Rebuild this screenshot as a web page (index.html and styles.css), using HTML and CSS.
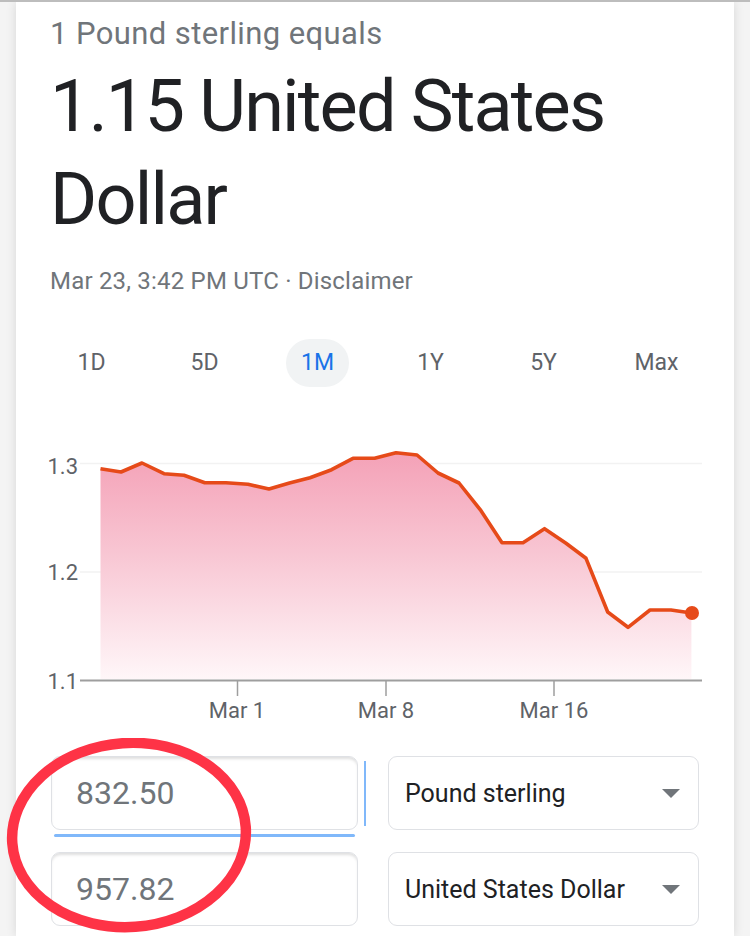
FILE: index.html
```html
<!DOCTYPE html>
<html>
<head>
<meta charset="utf-8">
<link rel="stylesheet" href="styles.css">
</head>
<body>
<div class="card">
  <div class="subtitle">1 Pound sterling equals</div>
  <div class="headline">1.15 United States Dollar</div>
  <div class="meta">Mar 23, 3:42 PM UTC · Disclaimer</div>
  <div class="tabs">
    <div class="tab"><span>1D</span></div>
    <div class="tab"><span>5D</span></div>
    <div class="tab active"><span>1M</span></div>
    <div class="tab"><span>1Y</span></div>
    <div class="tab"><span>5Y</span></div>
    <div class="tab"><span>Max</span></div>
  </div>
  <svg class="chart" width="718" height="314" viewBox="16 420 718 314">
    <defs>
      <linearGradient id="fill" x1="0" y1="450" x2="0" y2="682" gradientUnits="userSpaceOnUse">
        <stop offset="0" stop-color="#f4a0b6"/>
        <stop offset="0.45" stop-color="#f8c6d3"/>
        <stop offset="1" stop-color="#fff7f9"/>
      </linearGradient>
    </defs>
    <line x1="80" y1="464.5" x2="702" y2="464.5" stroke="#f2f2f2" stroke-width="1.5"/>
    <line x1="80" y1="573" x2="702" y2="573" stroke="#f2f2f2" stroke-width="1.5"/>
    <path fill="url(#fill)" d="M100.5,469.7 L121,473 L142,464 L164,474.7 L184,476.3 L204.8,483.7 L226,483.7 L248,485.3 L269,490 L289.5,484 L310,478.7 L331.6,470.7 L353,459.3 L374.6,459.3 L396,453.7 L417,456 L438,474 L459,484 L481,511.7 L502,543.7 L523,543.7 L544.5,529.7 L566,544.3 L586,559.3 L607.7,613 L628,628.3 L650,611 L671,611 L691.4,614 L691.4,680 L100.5,680 Z"/>
    <path fill="none" stroke="#e64a19" stroke-width="3.6" stroke-linejoin="round" d="M100.5,469.7 L121,473 L142,464 L164,474.7 L184,476.3 L204.8,483.7 L226,483.7 L248,485.3 L269,490 L289.5,484 L310,478.7 L331.6,470.7 L353,459.3 L374.6,459.3 L396,453.7 L417,456 L438,474 L459,484 L481,511.7 L502,543.7 L523,543.7 L544.5,529.7 L566,544.3 L586,559.3 L607.7,613 L628,628.3 L650,611 L671,611 L691.4,614"/>
    <circle cx="692" cy="614" r="7" fill="#e64a19"/>
    <line x1="80" y1="681.5" x2="702" y2="681.5" stroke="#9e9e9e" stroke-width="2"/>
    <line x1="237.5" y1="682" x2="237.5" y2="697" stroke="#9e9e9e" stroke-width="1.5"/>
    <line x1="386" y1="682" x2="386" y2="697" stroke="#9e9e9e" stroke-width="1.5"/>
    <line x1="554" y1="682" x2="554" y2="697" stroke="#9e9e9e" stroke-width="1.5"/>
    <text class="ylab" x="78" y="475" text-anchor="end">1.3</text>
    <text class="ylab" x="78" y="581" text-anchor="end">1.2</text>
    <text class="ylab" x="78" y="690" text-anchor="end">1.1</text>
    <text class="xlab" x="237" y="719" text-anchor="middle">Mar 1</text>
    <text class="xlab" x="386" y="719" text-anchor="middle">Mar 8</text>
    <text class="xlab" x="554" y="719" text-anchor="middle">Mar 16</text>
  </svg>
  <div class="converter">
    <div class="field focused">832.50</div>
    <div class="select">Pound sterling<span class="caret"></span></div>
    <div class="field">957.82</div>
    <div class="select">United States Dollar<span class="caret"></span></div>
    <svg class="circle" width="260" height="210" viewBox="0 0 260 210">
      <ellipse cx="124" cy="97" rx="117" ry="92" fill="none" stroke="#fe3346" stroke-width="10.5" transform="rotate(-4 124 97)"/>
    </svg>
  </div>
</div>
</body>
</html>
```

FILE: styles.css
```css
html, body {
  margin: 0;
  padding: 0;
}
body {
  background: #f4f4f4;
  font-family: Roboto, "Liberation Sans", Arial, sans-serif;
  width: 750px;
  height: 936px;
  overflow: hidden;
  border-top: 2px solid #bdbdbd;
  box-sizing: border-box;
}
.card {
  margin: 0 16px;
  background: #fff;
  height: 934px;
  box-shadow: 0 0 10px rgba(0, 0, 0, 0.12);
  padding-left: 34px;
  box-sizing: border-box;
  position: relative;
}
.subtitle {
  font-size: 31px;
  line-height: 38px;
  color: #70757a;
  padding-top: 13px;
  letter-spacing: 0.4px;
}
.headline {
  font-size: 72px;
  line-height: 93px;
  color: #202124;
  width: 620px;
  margin-top: 7px;
  letter-spacing: -1.8px;
}
.meta {
  font-size: 24px;
  line-height: 30px;
  color: #70757a;
  margin-top: 20px;
  letter-spacing: 0.2px;
}
.tabs {
  display: flex;
  margin-left: -15px;
  margin-top: 43px;
}
.tab {
  width: 113px;
  display: flex;
  justify-content: center;
}
.tab span {
  display: block;
  height: 48px;
  line-height: 48px;
  padding: 0 15px;
  border-radius: 24px;
  font-size: 23px;
  color: #5f6368;
}
.tab.active span {
  background: #f1f3f4;
  color: #1a73e8;
}
.chart {
  display: block;
  margin-left: -34px;
  margin-top: 32px;
}
.ylab, .xlab {
  font-family: Roboto, "Liberation Sans", Arial, sans-serif;
  font-size: 22px;
  fill: #5f6368;
}
.converter {
  position: relative;
  display: grid;
  grid-template-columns: 307px 311px;
  column-gap: 30px;
  row-gap: 22px;
  margin-left: 1px;
  margin-top: 23px;
}
.field, .select {
  height: 74px;
  box-sizing: border-box;
  border: 1.5px solid #dfe1e5;
  border-radius: 9px;
  display: flex;
  align-items: center;
}
.field {
  padding-left: 24px;
  font-size: 32px;
  color: #70757a;
  box-shadow: inset 0 3px 3px -1px rgba(0, 0, 0, 0.13);
}
.field.focused {
  position: relative;
}
.field.focused::after {
  content: "";
  position: absolute;
  left: 2px;
  right: 2px;
  bottom: -8px;
  height: 3px;
  border-radius: 2px;
  background: #80b8fa;
}
.field.focused::before {
  content: "";
  position: absolute;
  right: -9px;
  top: 4px;
  bottom: 3px;
  width: 2px;
  background: #80b8fa;
}
.select {
  padding-left: 16px;
  padding-right: 18px;
  font-size: 25px;
  color: #202124;
  justify-content: space-between;
}
.caret {
  width: 0;
  height: 0;
  border-left: 9px solid transparent;
  border-right: 9px solid transparent;
  border-top: 9px solid #70757a;
}
.circle {
  position: absolute;
  left: -46px;
  top: -18px;
  pointer-events: none;
}
```
